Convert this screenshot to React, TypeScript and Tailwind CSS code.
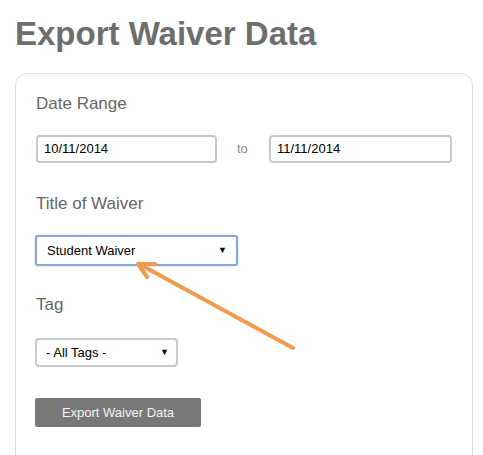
import React from "react";

function Field({ value, width }: { value: string; width: string }) {
  return (
    <div
      className={`${width} h-[28px] flex items-center pl-[6px] text-[13px] text-black border-2 border-[#c9c9c9] rounded-[4px] bg-white`}
    >
      {value}
    </div>
  );
}

function Select({
  value,
  className,
}: {
  value: string;
  className: string;
}) {
  return (
    <div
      className={`${className} flex items-center justify-between bg-white text-[13px] text-black`}
    >
      <span>{value}</span>
      <span className="text-[9px] leading-none mr-[1px]">▼</span>
    </div>
  );
}

export default function App() {
  return (
    <div
      className="relative w-[483px] h-[455px] overflow-hidden bg-white pl-[15px]"
      style={{ fontFamily: '"Liberation Sans", Arial, sans-serif' }}
    >
      <h1 className="pt-[15px] text-[33px] leading-[38px] font-bold text-[#6e6e6e]">
        Export Waiver Data
      </h1>

      <div className="mt-[20px] w-[458px] h-[420px] border border-[#dcdcdc] rounded-[12px] pt-[20px] pl-[20px]">
        <div className="text-[17px] leading-[20px] text-[#666]">Date Range</div>
        <div className="mt-[21px] flex items-center">
          <Field value="10/11/2014" width="w-[181px]" />
          <span className="ml-[20px] w-[32px] text-[13px] text-[#8a8a8a]">to</span>
          <Field value="11/11/2014" width="w-[183px]" />
        </div>

        <div className="mt-[31px] text-[17px] leading-[20px] text-[#666]">
          Title of Waiver
        </div>
        <Select
          value="Student Waiver"
          className="mt-[21px] -ml-[1px] w-[203px] h-[31px] pl-[10px] pr-[8px] border-2 border-[#88a6d8] rounded-[3px] shadow-[0_0_2px_#a9c1e8]"
        />

        <div className="mt-[29px] text-[17px] leading-[20px] text-[#666]">Tag</div>
        <Select
          value="- All Tags -"
          className="mt-[23px] -ml-[1px] w-[143px] h-[29px] pl-[9px] pr-[6px] border-2 border-[#c9c9c9] rounded-[4px]"
        />

        <button className="mt-[31px] -ml-[1px] w-[166px] h-[29px] bg-[#787878] rounded-[2px] text-[13px] text-[#f4f4f4]">
          Export Waiver Data
        </button>
      </div>

      <svg
        className="absolute left-0 top-0 pointer-events-none"
        width="483"
        height="455"
        viewBox="0 0 483 455"
      >
        <g stroke="#f29a4c" strokeWidth="4" strokeLinecap="round" fill="none">
          <line x1="293" y1="348" x2="139" y2="264" />
          <polyline points="155,264 138,264 147,277" strokeLinejoin="round" />
        </g>
      </svg>
    </div>
  );
}
